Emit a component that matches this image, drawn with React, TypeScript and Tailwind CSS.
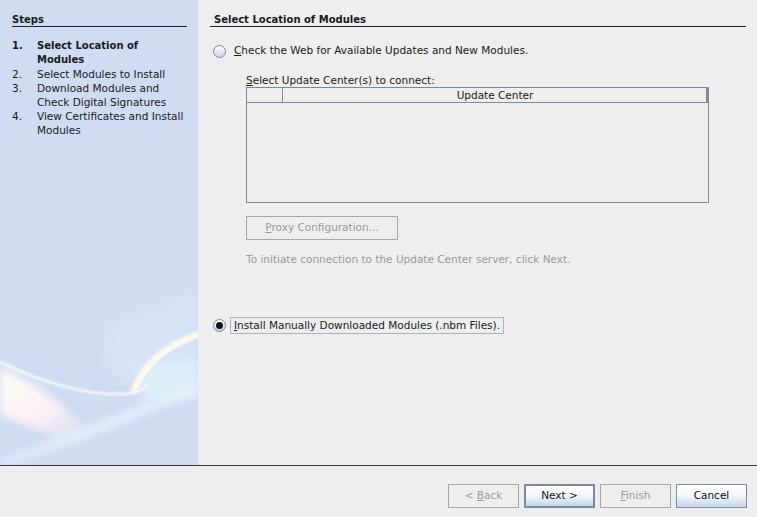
import React from "react";

const font = "font-['DejaVu_Sans',sans-serif]";

function Radio({ checked }: { checked?: boolean }) {
  return (
    <span className="w-[13px] h-[13px] rounded-full border border-[#7d8ca0] bg-gradient-to-b from-[#ffffff] to-[#c6d3e4] flex items-center justify-center shrink-0">
      {checked && <span className="w-[7px] h-[7px] rounded-full bg-[#111]" />}
    </span>
  );
}

function WizardButton({
  children,
  disabled,
  isDefault,
}: {
  children: React.ReactNode;
  disabled?: boolean;
  isDefault?: boolean;
}) {
  if (disabled) {
    return (
      <button className="w-[71px] h-[24px] border border-[#a6a6a6] bg-[#eeeeee] text-[#9a9a9a] text-[10.5px] flex items-center justify-center">
        <span>{children}</span>
      </button>
    );
  }
  return (
    <button
      className={`w-[71px] h-[24px] bg-gradient-to-b from-[#ffffff] via-[#f2f6fb] to-[#c4d4e8] text-[#111] text-[10.5px] flex items-center justify-center ${
        isDefault ? "border-2 border-[#7b8c9e]" : "border border-[#7b8c9e]"
      }`}
    >
      <span>{children}</span>
    </button>
  );
}

function Swoosh() {
  return (
    <svg className="absolute inset-0 w-full h-full" viewBox="0 0 198 465" preserveAspectRatio="none">
      <defs>
        <filter id="b8" x="-50%" y="-50%" width="200%" height="200%">
          <feGaussianBlur stdDeviation="8" />
        </filter>
        <filter id="b4" x="-50%" y="-50%" width="200%" height="200%">
          <feGaussianBlur stdDeviation="4" />
        </filter>
        <filter id="b1" x="-50%" y="-50%" width="200%" height="200%">
          <feGaussianBlur stdDeviation="0.8" />
        </filter>
        <linearGradient id="glow" x1="0" y1="0" x2="1" y2="1">
          <stop offset="0" stopColor="#fffff4" />
          <stop offset="0.55" stopColor="#fcf0f6" />
          <stop offset="1" stopColor="#f3e6f4" stopOpacity="0" />
        </linearGradient>
      </defs>
      {/* faint lighter haze */}
      <path d="M100 330 L198 290 L198 370 L115 385 Z" fill="#dbe8f7" opacity="0.6" filter="url(#b8)" />
      {/* cyan zone on right */}
      <path d="M138 368 Q165 358 198 360 L198 398 Q168 405 142 398 Z" fill="#dcf0fa" opacity="0.9" filter="url(#b4)" />
      {/* broad pink/white glow lower left */}
      <path d="M0 368 Q45 385 90 432 L75 445 Q30 425 0 415 Z" fill="url(#glow)" filter="url(#b4)" />
      {/* lower band */}
      <path d="M0 460 Q90 428 198 380 L198 390 Q95 440 0 466 Z" fill="#e8f0fa" opacity="0.85" filter="url(#b4)" />
      {/* thin main curve */}
      <path d="M0 362 Q70 396 125 394 Q142 392 148 384" fill="none" stroke="#f5f6f9" strokeWidth="3" filter="url(#b1)" />
      {/* bright sweep up to right */}
      <path d="M133 392 Q146 352 198 334" fill="none" stroke="#fbf8e6" strokeWidth="6" filter="url(#b1)" />
      <path d="M137 388 Q150 354 198 336" fill="none" stroke="#ffffff" strokeWidth="2" filter="url(#b1)" />
    </svg>
  );
}

export default function App() {
  return (
    <div className={`w-[757px] h-[517px] flex flex-col bg-[#eeeeee] text-[#1a1a1a] ${font}`}>
      <div className="h-[465px] flex">
        {/* Steps sidebar */}
        <aside className="w-[198px] relative bg-[#cfdcf2] overflow-hidden">
          <Swoosh />
          <div className="relative pl-[12px] pr-[11px]">
            <div className="pt-[13px] h-[27px] leading-[13px] border-b border-[#222] text-[10px] font-bold">
              Steps
            </div>
            <ol className="mt-[12px] text-[10.5px] leading-[14px]">
              <li className="flex font-bold text-[10px]">
                <span className="w-[25px] shrink-0">1.</span>
                <span>
                  Select Location of
                  <br />
                  Modules
                </span>
              </li>
              <li className="flex">
                <span className="w-[25px] shrink-0">2.</span>
                <span>Select Modules to Install</span>
              </li>
              <li className="flex">
                <span className="w-[25px] shrink-0">3.</span>
                <span>
                  Download Modules and
                  <br />
                  Check Digital Signatures
                </span>
              </li>
              <li className="flex">
                <span className="w-[25px] shrink-0">4.</span>
                <span>
                  View Certificates and Install
                  <br />
                  Modules
                </span>
              </li>
            </ol>
          </div>
        </aside>

        {/* Main panel */}
        <main className="flex-1 pl-[12px] pr-[11px]">
          <div className="pt-[13px] h-[27px] leading-[13px] border-b border-[#222] pl-[4px] text-[10px] font-bold">
            Select Location of Modules
          </div>

          <div className="mt-[16px] h-[16px] flex items-center pl-[3px] text-[10.5px]">
            <Radio />
            <span className="ml-[8px]">
              <u>C</u>heck the Web for Available Updates and New Modules.
            </span>
          </div>

          <div className="ml-[36px] mr-[37px]">
            <div className="mt-[14px] h-[14px] leading-[14px] text-[10.5px]">
              <u>S</u>elect Update Center(s) to connect:
            </div>
            <div className="h-[116px] border border-[#7a8a9a] flex flex-col">
              <div className="h-[15px] flex border-b border-[#7a8a9a] border-r-2 text-[10.5px] leading-[14px]">
                <div className="w-[36px] border-r border-[#7a8a9a]" />
                <div className="flex-1 text-center border-l border-white">Update Center</div>
              </div>
            </div>

            <button className="mt-[13px] w-[152px] h-[24px] border border-[#a6a6a6] text-[#9a9a9a] text-[10.5px] flex items-center justify-center">
              <span>
                <u>P</u>roxy Configuration...
              </span>
            </button>

            <div className="mt-[12px] h-[14px] leading-[14px] text-[10.5px] text-[#9a9a9a]">
              To initiate connection to the Update Center server, click Next.
            </div>
          </div>

          <div className="mt-[51px] h-[17px] flex items-center pl-[3px] text-[10.5px]">
            <Radio checked />
            <span className="ml-[4px] h-[17px] px-[3px] border border-[#a3b8cc] leading-[15px]">
              <u>I</u>nstall Manually Downloaded Modules (.nbm Files).
            </span>
          </div>
        </main>
      </div>

      <div className="h-px bg-[#3a3a3a]" />

      <footer className="flex-1 flex items-start justify-end gap-[5px] pt-[18px] pr-[10px]">
        <WizardButton disabled>
          &lt; <u>B</u>ack
        </WizardButton>
        <WizardButton isDefault>Next &gt;</WizardButton>
        <WizardButton disabled>
          <u>F</u>inish
        </WizardButton>
        <WizardButton>Cancel</WizardButton>
      </footer>
    </div>
  );
}
